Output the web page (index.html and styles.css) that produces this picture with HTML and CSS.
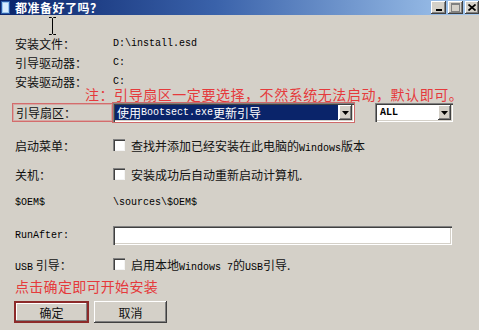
FILE: index.html
```html
<!DOCTYPE html>
<html lang="zh-CN">
<head>
<meta charset="utf-8">
<title>都准备好了吗？</title>
<link rel="stylesheet" href="styles.css">
</head>
<body>
<div class="window">
  <div class="titlebar">
    <span class="app-icon">
      <svg width="10" height="13" viewBox="0 0 10 13"><rect x="0.5" y="0.5" width="8" height="12" fill="#9cc8ee" stroke="#2a5aa8"/><rect x="2" y="2" width="5" height="9" fill="#d8ecff"/></svg>
    </span>
    <span class="title">都准备好了吗？</span>
    <div class="controls">
      <span class="cbtn"><svg width="8" height="7" viewBox="0 0 8 7"><rect x="1" y="5" width="6" height="2" fill="#000"/></svg></span>
      <span class="cbtn disabled"><svg width="9" height="9" viewBox="0 0 9 9"><rect x="0.5" y="0.5" width="8" height="8" fill="none" stroke="#808080"/><rect x="0" y="0" width="9" height="2" fill="#808080"/></svg></span>
      <span class="cbtn close"><svg width="8" height="7" viewBox="0 0 8 7"><path d="M0.5 0.5 L7.5 6.5 M7.5 0.5 L0.5 6.5" stroke="#000" stroke-width="1.7"/></svg></span>
    </div>
  </div>

  <div class="content">
    <div class="row r-info first"><span class="label">安装文件：</span><span class="mono">D:\install.esd</span></div>
    <div class="row r-info"><span class="label">引导驱动器：</span><span class="mono">C:</span></div>
    <div class="row r-info"><span class="label">安装驱动器：</span><span class="mono">C:</span></div>

    <div class="note">注：引导扇区一定要选择，不然系统无法启动，默认即可。</div>

    <div class="row r-sector">
      <span class="label boxed">引导扇区：</span>
      <div class="combo wide">
        <span class="combo-text selected">使用<span class="mono">Bootsect.exe</span>更新引导</span>
        <span class="drop"><svg width="7" height="4" viewBox="0 0 7 4"><path d="M0 0 H7 L3.5 4 Z" fill="#000"/></svg></span>
      </div>
      <div class="combo small">
        <span class="combo-text mono">ALL</span>
        <span class="drop"><svg width="7" height="4" viewBox="0 0 7 4"><path d="M0 0 H7 L3.5 4 Z" fill="#000"/></svg></span>
      </div>
    </div>

    <div class="row r-menu"><span class="label">启动菜单：</span><span class="check"></span><span class="check-text">查找并添加已经安装在此电脑的<span class="mono">Windows</span>版本</span></div>
    <div class="row r-shut"><span class="label">关机：</span><span class="check"></span><span class="check-text">安装成功后自动重新启动计算机.</span></div>
    <div class="row r-oem"><span class="label mono">$OEM$</span><span class="mono">\sources\$OEM$</span></div>
    <div class="row r-run"><span class="label mono">RunAfter:</span><span class="textbox"></span></div>
    <div class="row r-usb"><span class="label"><span class="mono">USB</span> 引导：</span><span class="check"></span><span class="check-text">启用本地<span class="mono">Windows 7</span>的<span class="mono">USB</span>引导.</span></div>

    <div class="hint">点击确定即可开始安装</div>

    <div class="buttons">
      <span class="btn default">确定</span>
      <span class="btn">取消</span>
    </div>
  </div>

  <svg class="ibeam" width="7" height="18" viewBox="0 0 7 18"><path d="M0 0.5 H2.5 L3.5 1.5 L4.5 0.5 H7 M3.5 1.5 V16.5 M0 17.5 H2.5 L3.5 16.5 L4.5 17.5 H7" fill="none" stroke="#000" stroke-width="1"/></svg>
</div>
</body>
</html>
```

FILE: styles.css
```css
html, body {
  margin: 0;
  padding: 0;
  background: #d4d0c8;
}

body {
  font-family: "Noto Sans CJK SC", "Noto Sans", sans-serif;
  font-size: 12px;
  color: #111;
}

.window {
  position: relative;
  width: 479px;
  height: 330px;
  overflow: hidden;
  background: #d4d0c8;
}

/* title bar */
.titlebar {
  height: 15px;
  display: flex;
  align-items: center;
  background: linear-gradient(to right, #0a246a 0%, #3a62aa 45%, #a6caf0 100%);
  color: #fff;
}

.app-icon {
  display: flex;
  margin-left: 1px;
  margin-right: 4px;
}

.title {
  font-weight: bold;
  font-size: 12px;
  line-height: 15px;
  letter-spacing: 0.5px;
}

.controls {
  margin-left: auto;
  display: flex;
  gap: 2px;
  align-self: flex-start;
  margin-top: 1px;
}

.cbtn {
  width: 15px;
  height: 13px;
  background: #d4d0c8;
  box-shadow: inset -1px -1px #404040, inset 1px 1px #fff, inset -2px -2px #808080;
  display: flex;
  align-items: center;
  justify-content: center;
}

.cbtn.close {
  width: 14px;
}

/* content */
.content {
  position: relative;
  padding: 19px 0 0 15px;
}

.row {
  display: flex;
  align-items: center;
}

.label {
  width: 98px;
  flex: none;
}

.mono {
  font-family: "Liberation Mono", "DejaVu Sans Mono", monospace;
  font-size: 10px;
  color: #000;
}

.r-info {
  height: 19px;
  line-height: 12px;
}

.note {
  position: absolute;
  left: 85px;
  top: 72px;
  font-size: 14px;
  line-height: 14px;
  color: #e53a3c;
  letter-spacing: 0.55px;
  white-space: nowrap;
}

/* sector row */
.r-sector {
  height: 19px;
  margin-top: 12px;
}

.label.boxed {
  margin-left: -3px;
  padding-left: 3px;
  width: 96px;
  height: 17px;
  line-height: 17px;
  border: 1px solid #d46c6c;
  box-shadow: inset 0 0 0 1px rgba(214, 120, 120, 0.45);
}

.combo {
  height: 19px;
  box-sizing: border-box;
  display: flex;
  align-items: stretch;
  background: #fff;
  box-shadow: inset 1px 1px #808080, inset 2px 2px #404040, inset -1px -1px #fff, inset -2px -2px #d4d0c8;
  padding: 2px;
}

.combo.wide {
  width: 241px;
  outline: 1px solid #cf6a6a;
}

.combo.small {
  width: 78px;
  margin-left: 21px;
}

.combo-text {
  flex: 1;
  display: flex;
  align-items: center;
  padding-left: 2px;
  white-space: nowrap;
  color: #000;
}

.combo-text.selected {
  background: #0a246a;
  color: #fff;
  margin-right: 1px;
}

.combo-text.selected .mono {
  color: #fff;
}

.combo-text.mono {
  padding-left: 3px;
  font-weight: bold;
  color: #000;
}

.drop {
  width: 13px;
  flex: none;
  background: #d4d0c8;
  box-shadow: inset -1px -1px #404040, inset 1px 1px #fff, inset -2px -2px #808080;
  display: flex;
  align-items: center;
  justify-content: center;
}

/* checkbox rows */
.r-menu {
  height: 20px;
  margin-top: 13px;
}

.r-shut {
  height: 20px;
  margin-top: 9px;
}

.r-oem {
  height: 20px;
  margin-top: 8px;
}

.r-run {
  height: 19px;
  margin-top: 14px;
}

.r-usb {
  height: 20px;
  margin-top: 9px;
}

.check {
  width: 12px;
  height: 12px;
  flex: none;
  box-sizing: border-box;
  background: #fff;
  box-shadow: inset 1px 1px #808080, inset 2px 2px #404040, inset -1px -1px #f4f4f4;
  margin-right: 6px;
}

.check-text {
  white-space: nowrap;
}

.textbox {
  width: 339px;
  height: 19px;
  box-sizing: border-box;
  background: #fff;
  box-shadow: inset 1px 1px #808080, inset 2px 2px #404040, inset -1px -1px #fff, inset -2px -2px #d4d0c8;
}

/* footer */
.hint {
  margin-top: 4px;
  height: 16px;
  line-height: 16px;
  font-size: 14px;
  color: #e53a3c;
  letter-spacing: 0.3px;
}

.buttons {
  display: flex;
  gap: 5px;
  margin-top: 7px;
  margin-left: -1px;
}

.btn {
  width: 73px;
  height: 22px;
  box-sizing: border-box;
  display: flex;
  align-items: center;
  justify-content: center;
  background: #d4d0c8;
  box-shadow: inset -1px -1px #404040, inset 1px 1px #fff, inset -2px -2px #808080;
  color: #111;
}

.btn.default {
  width: 75px;
  border: 2px solid #8c2a2a;
  box-shadow: inset -1px -1px #808080, inset 1px 1px #fff;
}

.ibeam {
  position: absolute;
  left: 49px;
  top: 17px;
}
```
